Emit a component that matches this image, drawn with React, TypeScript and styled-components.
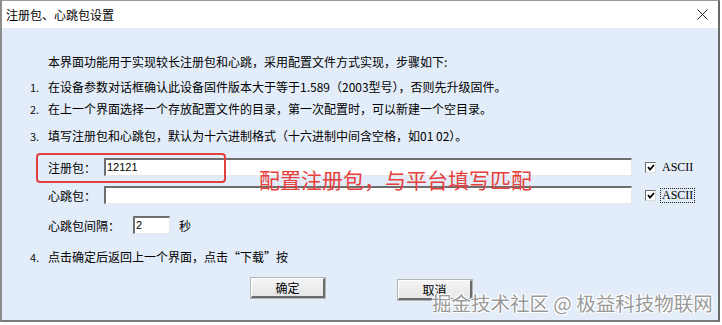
import React from 'react'
import styled, { createGlobalStyle } from 'styled-components'

const GlobalStyle = createGlobalStyle`
  html, body {
    margin: 0;
    padding: 0;
    background: #ffffff;
    overflow: hidden;
  }
  body {
    font-family: "Noto Sans CJK SC", "Liberation Sans", sans-serif;
    font-size: 12px;
    color: #000;
  }
`

const Page = styled.div`
  width: 722px;
  height: 325px;
  overflow: hidden;
`

const Window = styled.div`
  position: relative;
  width: 716px;
  border: 2px solid #8c8c8c;
  border-top: 1px solid #9a9a9a;
  border-right: 2px solid #6a6a6a;
  border-bottom: 2px solid #7a7a7a;
`

const TitleBar = styled.div`
  height: 27px;
  display: flex;
  align-items: center;
  justify-content: space-between;
  padding: 0 10px 0 4px;
  background: #ffffff;
  font-size: 12px;
`

const CloseIcon = styled.svg`
  width: 11px;
  height: 11px;
`

const Body = styled.div`
  background: #e3edf9;
  height: 292px;
  padding: 26px 0 0 0;
  box-sizing: border-box;
  display: flex;
  flex-direction: column;
`

const Line = styled.div<{ $gap: number }>`
  display: flex;
  margin-top: ${(p) => p.$gap}px;
  line-height: 16px;
  height: 16px;
  white-space: nowrap;
`

const Num = styled.span`
  width: 18px;
  padding-left: 28px;
  font-size: 11px;
  color: #111;
`

const Row = styled.div<{ $gap: number }>`
  display: flex;
  align-items: center;
  margin-top: ${(p) => p.$gap}px;
  height: 18px;
  padding-left: 46px;
  white-space: nowrap;
`

const Label = styled.span<{ $w: number }>`
  width: ${(p) => p.$w}px;
`

const TextBox = styled.div<{ $w: number }>`
  width: ${(p) => p.$w}px;
  height: 18px;
  box-sizing: border-box;
  background: #ffffff;
  border-top: 2px solid #6e6e6e;
  border-left: 2px solid #6e6e6e;
  border-right: 1px solid #e9e9e9;
  border-bottom: 1px solid #e9e9e9;
  font-family: "Liberation Sans", sans-serif;
  font-size: 11px;
  line-height: 14px;
  padding-left: 1px;
`

const Check = styled.div`
  width: 11px;
  height: 11px;
  margin-left: 13px;
  box-sizing: border-box;
  background: #ffffff;
  border-top: 1px solid #6b6b6b;
  border-left: 1px solid #6b6b6b;
  border-right: 1px solid #dcdcdc;
  border-bottom: 1px solid #dcdcdc;
  display: flex;
  align-items: center;
  justify-content: center;
`

const Ascii = styled.span<{ $focus?: boolean }>`
  margin-left: 5px;
  font-family: "Liberation Serif", serif;
  font-size: 12px;
  line-height: 13px;
  padding: 0 1px;
  outline: ${(p) => (p.$focus ? '1px dotted #222' : 'none')};
`

const Unit = styled.span`
  margin-left: 9px;
`

const ButtonRow = styled.div`
  display: flex;
  align-items: flex-start;
  margin-top: 13px;
  padding-left: 249px;
  gap: 73px;
`

const Button = styled.div<{ $drop?: number }>`
  width: 74px;
  height: 20px;
  margin-top: ${(p) => p.$drop ?? 0}px;
  box-sizing: border-box;
  background: linear-gradient(#f4f4f4, #e6e6e6);
  border-top: 1px solid #ffffff;
  border-left: 1px solid #ffffff;
  border-right: 2px solid #6a6a6a;
  border-bottom: 2px solid #6a6a6a;
  box-shadow: 0 0 0 1px #b5b5b5;
  display: flex;
  align-items: center;
  justify-content: center;
  font-size: 12px;
`

const Highlight = styled.div`
  position: absolute;
  left: 34px;
  top: 152px;
  width: 190px;
  height: 30px;
  box-sizing: border-box;
  border: 2px solid #e2403f;
  border-radius: 4px;
`

const Note = styled.div`
  position: absolute;
  left: 257px;
  top: 165px;
  font-size: 21px;
  line-height: 26px;
  color: #e8403c;
  white-space: nowrap;
`

const Watermark = styled.div`
  position: absolute;
  left: 430px;
  top: 290px;
  font-size: 19.5px;
  line-height: 24px;
  color: #999999;
  white-space: nowrap;
  text-shadow: 1px 1px 0 #ffffff, -1px -1px 0 #ffffff, 1px -1px 0 #ffffff, -1px 1px 0 #ffffff;
`

const Below = styled.div`
  margin-top: 1px;
  padding-left: 20px;
  font-size: 13px;
  line-height: 16px;
  white-space: nowrap;
`

function Tick() {
  return (
    <svg width="8" height="7" viewBox="0 0 8 7">
      <path d="M1 3 L3 5.5 L7 1" stroke="#000" strokeWidth="1.8" fill="none" />
    </svg>
  )
}

export default function App() {
  return (
    <Page>
      <GlobalStyle />
      <Window>
        <TitleBar>
          <span>注册包、心跳包设置</span>
          <CloseIcon viewBox="0 0 11 11">
            <path d="M0.5 0.5 L10.5 10.5 M10.5 0.5 L0.5 10.5" stroke="#222" strokeWidth="1" />
          </CloseIcon>
        </TitleBar>
        <Body>
          <Line $gap={0}>
            <Num />
            <span>本界面功能用于实现较长注册包和心跳，采用配置文件方式实现，步骤如下:</span>
          </Line>
          <Line $gap={9}>
            <Num>1.</Num>
            <span>在设备参数对话框确认此设备固件版本大于等于1.589（2003型号），否则先升级固件。</span>
          </Line>
          <Line $gap={6}>
            <Num>2.</Num>
            <span>在上一个界面选择一个存放配置文件的目录，第一次配置时，可以新建一个空目录。</span>
          </Line>
          <Line $gap={11}>
            <Num>3.</Num>
            <span>填写注册包和心跳包，默认为十六进制格式（十六进制中间含空格，如01 02）。</span>
          </Line>
          <Row $gap={14}>
            <Label $w={56}>注册包：</Label>
            <TextBox $w={528}>12121</TextBox>
            <Check>
              <Tick />
            </Check>
            <Ascii>ASCII</Ascii>
          </Row>
          <Row $gap={10}>
            <Label $w={56}>心跳包：</Label>
            <TextBox $w={528} />
            <Check>
              <Tick />
            </Check>
            <Ascii $focus>ASCII</Ascii>
          </Row>
          <Row $gap={12}>
            <Label $w={85}>心跳包间隔：</Label>
            <TextBox $w={37}>2</TextBox>
            <Unit>秒</Unit>
          </Row>
          <Line $gap={15}>
            <Num>4.</Num>
            <span>点击确定后返回上一个界面，点击“下载”按</span>
          </Line>
          <ButtonRow>
            <Button>确定</Button>
            <Button $drop={2}>取消</Button>
          </ButtonRow>
        </Body>
        <Highlight />
        <Note>配置注册包，与平台填写匹配</Note>
        <Watermark>掘金技术社区 @ 极益科技物联网</Watermark>
      </Window>
      <Below>已到达 退出会话的时候图。</Below>
    </Page>
  )
}
